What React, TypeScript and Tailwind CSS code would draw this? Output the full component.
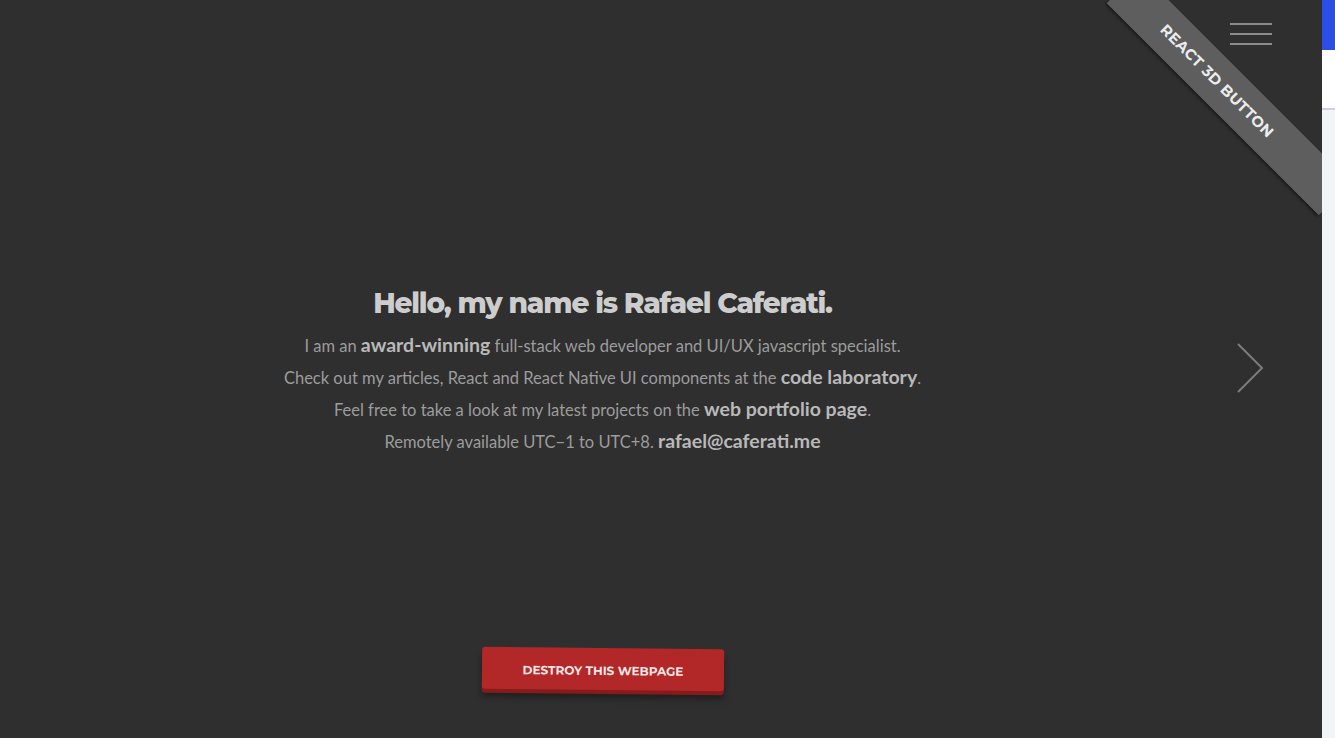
const heading = "font-['Montserrat','Inter',sans-serif]";

function Hamburger() {
  return (
    <div className="absolute right-[50px] top-[23px] flex w-[42px] flex-col gap-[8px]">
      <span className="h-[2px] w-full bg-[#8b8b8b]" />
      <span className="h-[2px] w-full bg-[#8b8b8b]" />
      <span className="h-[2px] w-full bg-[#8b8b8b]" />
    </div>
  );
}

function Ribbon() {
  return (
    <div className="absolute right-[-57px] top-[70px] flex h-[46px] w-[300px] rotate-45 items-center justify-center bg-[#5e5e5e] pr-[34px] shadow-[0_2px_3px_rgba(0,0,0,0.45)]">
      <span className={`${heading} text-[15px] font-bold tracking-[0.3px] text-[#ececec]`}>
        REACT 3D BUTTON
      </span>
    </div>
  );
}

function NextArrow() {
  return (
    <svg
      className="absolute right-[56px] top-[342px]"
      width="30"
      height="54"
      viewBox="0 0 30 54"
      fill="none"
    >
      <path d="M2 2 L26 26 L2 50" stroke="#7b7b7b" strokeWidth="2" />
    </svg>
  );
}

function Strong({ children }: { children: React.ReactNode }) {
  return <b className="text-[19.5px] font-bold leading-[32px] text-[#b9b9b9]">{children}</b>;
}

export default function App() {
  return (
    <div className="flex h-[738px] w-full overflow-hidden bg-[#f2f4f8]">
      <main className="relative flex h-full w-[1322px] shrink-0 flex-col items-center overflow-hidden bg-[#2f2f2f] pr-[117px] pt-[285px]">
        <h1 className={`${heading} text-[28px] font-extrabold leading-[36px] tracking-[-1.2px] text-[#cdcdcd]`}>
          Hello, my name is Rafael Caferati.
        </h1>
        <div className="mt-[8px] flex flex-col items-center font-['Lato',sans-serif] text-[16.5px] leading-[32px] text-[#9c9c9c]">
          <p className="h-[32px]">
            I am an <Strong>award-winning</Strong> full-stack web developer and UI/UX javascript specialist.
          </p>
          <p className="h-[32px]">
            Check out my articles, React and React Native UI components at the <Strong>code laboratory</Strong>.
          </p>
          <p className="h-[32px]">
            Feel free to take a look at my latest projects on the <Strong>web portfolio page</Strong>.
          </p>
          <p className="h-[32px]">
            Remotely available UTC−1 to UTC+8. <Strong>rafael@caferati.me</Strong>
          </p>
        </div>
        <button className="mt-[191px] h-[42px] w-[242px] rotate-[0.6deg] rounded-[3px] bg-[#b22727] shadow-[0_4px_0_#861b1b,0_8px_6px_rgba(0,0,0,0.35)]">
          <span className={`${heading} text-[12px] font-bold tracking-[0px] text-[#f3e6e6]`}>
            DESTROY THIS WEBPAGE
          </span>
        </button>
        <Hamburger />
        <NextArrow />
        <Ribbon />
      </main>
      <aside className="flex w-[13px] flex-col">
        <div className="h-[50px] bg-[#2a4fe2]" />
        <div className="h-[60px] border-b-2 border-[#ccd3dd] bg-white" />
      </aside>
    </div>
  );
}
